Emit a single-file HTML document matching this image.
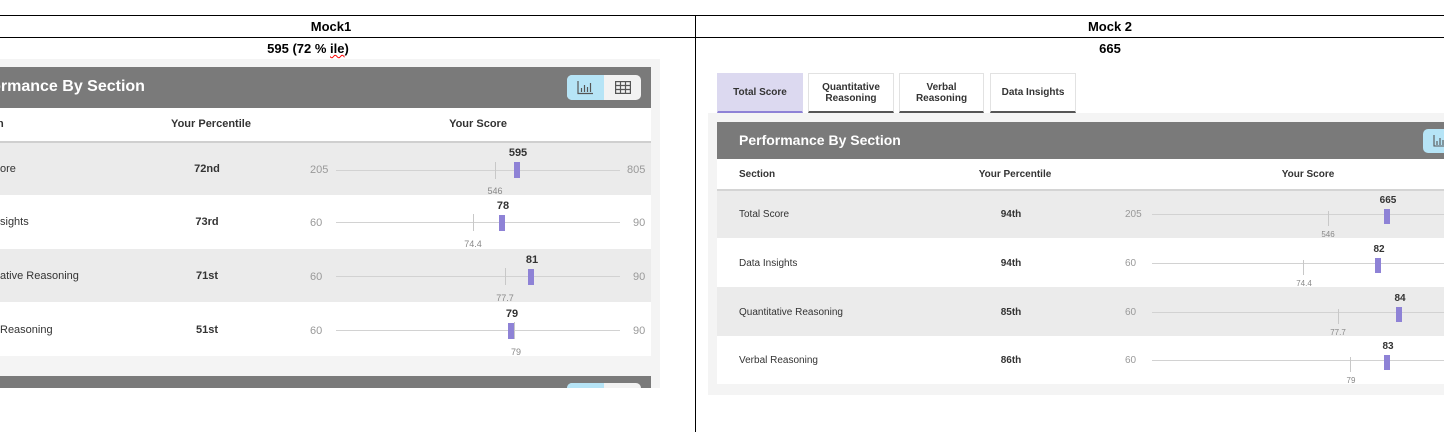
<!DOCTYPE html>
<html><head><meta charset="utf-8">
<style>
*{margin:0;padding:0;box-sizing:border-box}
body{width:1444px;height:432px;position:relative;overflow:hidden;background:#fff;font-family:"Liberation Sans",sans-serif;color:#333}
.a{position:absolute}
.t{position:absolute;white-space:nowrap}
.c{transform:translateX(-50%)}
.b{font-weight:bold}
.mk{position:absolute;width:6px;height:16px;background:#8e82d6}
.tk{position:absolute;width:1px;height:17px;background:#c8c8c8}
.ln{position:absolute;height:1px;background:#d2d2d2}
.sm{font-size:10px;color:#888}
.rl{font-size:11px;color:#999}
.tab{position:absolute;top:73px;height:40px;background:#fff;border:1px solid #e2e2e2;border-bottom:2px solid #555;font-size:10px;font-weight:bold;color:#333;display:flex;align-items:center;justify-content:center;text-align:center;line-height:11px}
</style></head><body>
<!-- borders -->
<div class="a" style="left:0;top:15px;width:1444px;height:1px;background:#000"></div>
<div class="a" style="left:0;top:37px;width:1444px;height:1px;background:#000"></div>
<div class="a" style="left:695px;top:15px;width:1px;height:417px;background:#000"></div>
<div class="t c b" style="left:331px;top:19px;font-size:13px;color:#000">Mock1</div>
<div class="t c b" style="left:1110px;top:19px;font-size:13px;color:#000">Mock 2</div>
<div class="t c b" style="left:308px;top:41px;font-size:13px;color:#000">595 (72 % <span style="text-decoration:underline wavy red;text-decoration-thickness:1px">ile</span>)</div>
<div class="t c b" style="left:1110px;top:41px;font-size:13px;color:#000">665</div>

<!-- LEFT PANEL -->
<div class="a" style="left:0;top:59px;width:660px;height:329px;background:#f4f4f4"></div>
<div class="a" style="left:0;top:67px;width:651px;height:41px;background:#7a7a7a"></div>
<div class="t b" style="left:-40px;top:78px;font-size:16px;color:#fff">Performance By Section</div>
<div class="a" style="left:567px;top:75px;width:74px;height:25px;border-radius:5px;background:#f2f2f2;overflow:hidden">
 <div class="a" style="left:0;top:0;width:37px;height:25px;background:#b6e4f6"></div>
 <svg class="a" style="left:10px;top:5px" width="17" height="15" viewBox="0 0 17 15"><g stroke="#555" stroke-width="1.2" fill="none"><path d="M1 1V13.5H16"/><path d="M4.5 12V8M7.5 12V5M10.5 12V7M13.5 12V3"/></g></svg>
 <svg class="a" style="left:48px;top:6px" width="16" height="13" viewBox="0 0 16 13"><g stroke="#555" stroke-width="1.2" fill="none"><rect x="0.6" y="0.6" width="14.8" height="11.8"/><path d="M0.6 4.5H15.4M0.6 8.5H15.4M5.5 0.6V12.4M10.5 0.6V12.4"/></g></svg>
</div>
<div class="a" style="left:0;top:108px;width:651px;height:33px;background:#fff"></div>
<div class="a" style="left:0;top:141px;width:651px;height:2px;background:#cfcfcf"></div>
<div class="t b" style="left:-3px;top:118px;font-size:11px">n</div>
<div class="t c b" style="left:211px;top:118px;font-size:11px">Your Percentile</div>
<div class="t c b" style="left:478px;top:118px;font-size:11px">Your Score</div>

<div class="a" style="left:0;top:143px;width:651px;height:52px;background:#ebebeb"></div>
<div class="a" style="left:0;top:195px;width:651px;height:54px;background:#fff"></div>
<div class="a" style="left:0;top:249px;width:651px;height:53px;background:#ebebeb"></div>
<div class="a" style="left:0;top:302px;width:651px;height:54px;background:#fff"></div>

<!-- L row1 -->
<div class="t" style="left:0;top:163px;font-size:11px">ore</div>
<div class="t c b" style="left:207px;top:163px;font-size:11px">72nd</div>
<div class="t rl" style="left:310px;top:164px">205</div>
<div class="ln" style="left:336px;top:170px;width:284px"></div>
<div class="t rl" style="left:627px;top:164px">805</div>
<div class="tk" style="left:495px;top:162px"></div>
<div class="t c sm" style="left:495px;top:186px;font-size:9px">546</div>
<div class="mk" style="left:514px;top:162px"></div>
<div class="t c b" style="left:518px;top:147px;font-size:11px">595</div>
<!-- L row2 -->
<div class="t" style="left:0;top:216px;font-size:11px">sights</div>
<div class="t c b" style="left:207px;top:216px;font-size:11px">73rd</div>
<div class="t rl" style="left:310px;top:217px">60</div>
<div class="ln" style="left:336px;top:222px;width:284px"></div>
<div class="t rl" style="left:633px;top:217px">90</div>
<div class="tk" style="left:473px;top:214px"></div>
<div class="t c sm" style="left:473px;top:239px;font-size:9px">74.4</div>
<div class="mk" style="left:499px;top:215px"></div>
<div class="t c b" style="left:503px;top:200px;font-size:11px">78</div>
<!-- L row3 -->
<div class="t" style="left:0;top:270px;font-size:11px">ative Reasoning</div>
<div class="t c b" style="left:207px;top:270px;font-size:11px">71st</div>
<div class="t rl" style="left:310px;top:271px">60</div>
<div class="ln" style="left:336px;top:276px;width:284px"></div>
<div class="t rl" style="left:633px;top:271px">90</div>
<div class="tk" style="left:505px;top:268px"></div>
<div class="t c sm" style="left:505px;top:293px;font-size:9px">77.7</div>
<div class="mk" style="left:528px;top:269px"></div>
<div class="t c b" style="left:532px;top:254px;font-size:11px">81</div>
<!-- L row4 -->
<div class="t" style="left:0;top:324px;font-size:11px">Reasoning</div>
<div class="t c b" style="left:207px;top:324px;font-size:11px">51st</div>
<div class="t rl" style="left:310px;top:325px">60</div>
<div class="ln" style="left:336px;top:330px;width:284px"></div>
<div class="t rl" style="left:633px;top:325px">90</div>
<div class="tk" style="left:514px;top:322px"></div>
<div class="t c sm" style="left:516px;top:347px;font-size:9px">79</div>
<div class="mk" style="left:508px;top:323px"></div>
<div class="t c b" style="left:512px;top:308px;font-size:11px">79</div>

<div class="a" style="left:0;top:376px;width:651px;height:12px;background:#7a7a7a"></div>
<div class="a" style="left:567px;top:383px;width:74px;height:5px;border-radius:5px 5px 0 0;background:#f2f2f2;overflow:hidden"><div class="a" style="left:0;top:0;width:37px;height:5px;background:#b6e4f6"></div></div>

<!-- RIGHT PANEL -->
<div class="tab" style="left:717px;width:86px;background:#dcd9f0;border-color:#dcd9f0;border-bottom:2px solid #8e82d6">Total Score</div>
<div class="tab" style="left:808px;width:86px">Quantitative<br>Reasoning</div>
<div class="tab" style="left:899px;width:85px">Verbal<br>Reasoning</div>
<div class="tab" style="left:990px;width:86px">Data Insights</div>

<div class="a" style="left:708px;top:113px;width:736px;height:282px;background:#f4f4f4"></div>
<div class="a" style="left:717px;top:122px;width:727px;height:37px;background:#7a7a7a"></div>
<div class="t b" style="left:739px;top:132px;font-size:14px;color:#fff">Performance By Section</div>
<div class="a" style="left:1423px;top:129px;width:30px;height:24px;border-radius:5px;background:#b6e4f6"></div>
<svg class="a" style="left:1433px;top:135px" width="11" height="12" viewBox="0 0 11 12"><g stroke="#555" stroke-width="1.1" fill="none"><path d="M1 0V11H11"/><path d="M4 10V6M7 10V3M10 10V5"/></g></svg>
<div class="a" style="left:717px;top:159px;width:727px;height:30px;background:#fff"></div>
<div class="a" style="left:717px;top:189px;width:727px;height:2px;background:#d4d4d4"></div>
<div class="t b" style="left:739px;top:169px;font-size:10px">Section</div>
<div class="t c b" style="left:1015px;top:169px;font-size:10px">Your Percentile</div>
<div class="t c b" style="left:1308px;top:169px;font-size:10px">Your Score</div>

<div class="a" style="left:717px;top:191px;width:727px;height:47px;background:#ebebeb"></div>
<div class="a" style="left:717px;top:238px;width:727px;height:49px;background:#fff"></div>
<div class="a" style="left:717px;top:287px;width:727px;height:49px;background:#ebebeb"></div>
<div class="a" style="left:717px;top:336px;width:727px;height:48px;background:#fff"></div>

<!-- R row1 -->
<div class="t" style="left:739px;top:209px;font-size:10px">Total Score</div>
<div class="t c b" style="left:1011px;top:209px;font-size:10px">94th</div>
<div class="t rl" style="left:1125px;top:209px;font-size:10px">205</div>
<div class="ln" style="left:1152px;top:214px;width:292px"></div>
<div class="tk" style="left:1328px;top:211px;height:15px"></div>
<div class="t c sm" style="left:1328px;top:230px;font-size:8px">546</div>
<div class="mk" style="left:1384px;top:209px;height:15px"></div>
<div class="t c b" style="left:1388px;top:195px;font-size:10px">665</div>
<!-- R row2 -->
<div class="t" style="left:739px;top:258px;font-size:10px">Data Insights</div>
<div class="t c b" style="left:1011px;top:258px;font-size:10px">94th</div>
<div class="t rl" style="left:1125px;top:258px;font-size:10px">60</div>
<div class="ln" style="left:1152px;top:263px;width:292px"></div>
<div class="tk" style="left:1303px;top:260px;height:15px"></div>
<div class="t c sm" style="left:1304px;top:279px;font-size:8px">74.4</div>
<div class="mk" style="left:1375px;top:258px;height:15px"></div>
<div class="t c b" style="left:1379px;top:244px;font-size:10px">82</div>
<!-- R row3 -->
<div class="t" style="left:739px;top:307px;font-size:10px">Quantitative Reasoning</div>
<div class="t c b" style="left:1011px;top:307px;font-size:10px">85th</div>
<div class="t rl" style="left:1125px;top:307px;font-size:10px">60</div>
<div class="ln" style="left:1152px;top:312px;width:292px"></div>
<div class="tk" style="left:1338px;top:309px;height:15px"></div>
<div class="t c sm" style="left:1338px;top:328px;font-size:8px">77.7</div>
<div class="mk" style="left:1396px;top:307px;height:15px"></div>
<div class="t c b" style="left:1400px;top:293px;font-size:10px">84</div>
<!-- R row4 -->
<div class="t" style="left:739px;top:355px;font-size:10px">Verbal Reasoning</div>
<div class="t c b" style="left:1011px;top:355px;font-size:10px">86th</div>
<div class="t rl" style="left:1125px;top:355px;font-size:10px">60</div>
<div class="ln" style="left:1152px;top:360px;width:292px"></div>
<div class="tk" style="left:1350px;top:357px;height:15px"></div>
<div class="t c sm" style="left:1351px;top:376px;font-size:8px">79</div>
<div class="mk" style="left:1384px;top:355px;height:15px"></div>
<div class="t c b" style="left:1388px;top:341px;font-size:10px">83</div>
</body></html>
